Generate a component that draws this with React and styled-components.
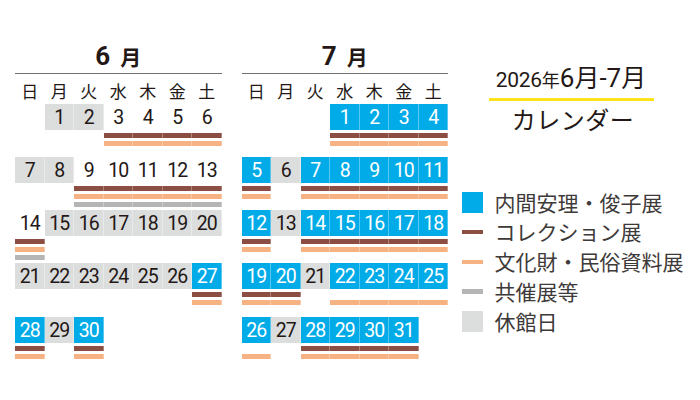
import React from 'react';
import styled, { createGlobalStyle } from 'styled-components';

const Global = createGlobalStyle`
  body {
    margin: 0;
    background: #fff;
  }
`;

const BLUE = '#00abe8';
const CLOSED = '#dcdddd';
const BROWN = '#8c4d42';
const ORANGE = '#f6b283';
const GRAYBAR = '#b5b5b6';
const INK = '#231815';

const Page = styled.div`
  display: flex;
  width: 700px;
  height: 400px;
  box-sizing: border-box;
  padding: 38px 0 0 15px;
  color: ${INK};
`;
const Calendars = styled.div`
  display: flex;
  gap: 20px;
`;
const Month = styled.section`
  width: 206.5px;
`;
const MonthTitle = styled.h2`
  margin: 0;
  height: 36px;
  box-sizing: border-box;
  border-bottom: 1.5px solid #727171;
  text-align: center;
  font: 700 26px/36px Roboto, "Noto Sans CJK JP", sans-serif;
`;
const TitleKanji = styled.span`
  margin-left: 10px;
  font-family: "Noto Sans CJK JP", sans-serif;
  font-size: 21px;
  line-height: 0;
`;
const Cols = styled.div`
  display: grid;
  grid-template-columns: repeat(7, 29.5px);
`;
const Weekdays = styled(Cols)`
  height: 29.5px;
  padding-top: 2.5px;
  box-sizing: border-box;
`;
const Weekday = styled.div`
  text-align: center;
  font: 400 17px/27px "Noto Sans CJK JP", sans-serif;
`;
const Week = styled(Cols)`
  height: 53.25px;
`;
const Day = styled.div`
  display: flex;
  flex-direction: column;
`;
const Cell = styled.div`
  height: 26px;
  padding-top: 1px;
  box-sizing: border-box;
  text-align: center;
  font: 400 19.5px/25px Roboto, sans-serif;
  letter-spacing: -1px;
  background: ${p => (p.$kind === 'open' ? BLUE : p.$kind === 'closed' ? CLOSED : 'transparent')};
  color: ${p => (p.$kind === 'open' ? '#fff' : INK)};
  box-shadow: ${p => (p.$kind ? 'inset -1px 0 rgba(255,255,255,0.35)' : 'none')};
`;
const Lanes = styled.div`
  display: flex;
  flex-direction: column;
  gap: 3px;
  margin-top: 3px;
`;
const Bar = styled.div`
  height: 5px;
  background: ${p => p.$color || 'transparent'};
  box-shadow: ${p => (p.$color ? 'inset -1px 0 rgba(255,255,255,0.3)' : 'none')};
`;

const Side = styled.aside`
  margin-left: 13.5px;
  padding-top: 24px;
`;
const Heading = styled.div`
  width: 165px;
  margin-left: 27px;
  text-align: center;
`;
const HeadTop = styled.div`
  height: 38.5px;
  box-sizing: border-box;
  border-bottom: 3.5px solid #ffe31a;
  font: 400 26px/32px Roboto, "Noto Sans CJK JP", sans-serif;
  white-space: nowrap;
`;
const Year = styled.span`
  font-family: "Liberation Sans Narrow", Roboto, sans-serif;
  font-size: 21px;
  letter-spacing: -0.3px;
  line-height: 0;
`;
const HeadKanji = styled.span`
  font-family: "Noto Sans CJK JP", sans-serif;
  font-size: ${p => p.$size || '25px'};
  line-height: 0;
`;
const HeadSub = styled.div`
  margin-top: 3px;
  font: 400 24px/30px "Noto Sans CJK JP", sans-serif;
  letter-spacing: 0.5px;
  padding-left: 4px;
`;
const Legend = styled.ul`
  list-style: none;
  margin: 54px 0 0;
  padding: 0;
`;
const LegendItem = styled.li`
  display: flex;
  align-items: center;
  gap: 12px;
  height: 29.75px;
  font: 400 21px/29.75px "Noto Sans CJK JP", sans-serif;
  color: #3e3a39;
  white-space: nowrap;
`;
const Swatch = styled.span`
  flex: none;
  width: 21px;
  height: ${p => (p.$line ? '4.5px' : '21px')};
  background: ${p => p.$color};
`;

const range = (a, b) => Array.from({ length: b - a + 1 }, (_, i) => a + i);
const set = (...parts) => new Set(parts.flat());

const months = [
  {
    label: '6',
    start: 1,
    days: 30,
    open: set(27, 28, 30),
    closed: set(1, 2, 7, 8, range(15, 26), 29),
    brown: set(range(3, 6), range(9, 14), 27, 28, 30),
    orange: set(range(3, 6), range(9, 14), 27, 28, 30),
    gray: set(range(9, 14)),
  },
  {
    label: '7',
    start: 3,
    days: 31,
    open: set(range(1, 5), range(7, 12), range(14, 20), range(22, 26), range(28, 31)),
    closed: set(6, 13, 21, 27),
    brown: set(range(1, 5), range(7, 12), range(14, 20), range(28, 31)),
    orange: set(range(1, 5), range(7, 12), range(14, 20), range(22, 26), range(28, 31)),
    gray: set(),
  },
];

const weekdays = ['日', '月', '火', '水', '木', '金', '土'];

function weeksOf(m) {
  const slots = [...Array(m.start).fill(null), ...range(1, m.days)];
  const weeks = [];
  for (let i = 0; i < slots.length; i += 7) weeks.push(slots.slice(i, i + 7));
  return weeks;
}

function MonthCalendar({ m }) {
  return (
    <Month>
      <MonthTitle>
        {m.label}
        <TitleKanji>月</TitleKanji>
      </MonthTitle>
      <Weekdays>
        {weekdays.map(w => (
          <Weekday key={w}>{w}</Weekday>
        ))}
      </Weekdays>
      {weeksOf(m).map((week, wi) => (
        <Week key={wi}>
          {week.map((d, di) => {
            if (!d) return <Day key={di} />;
            const kind = m.open.has(d) ? 'open' : m.closed.has(d) ? 'closed' : null;
            return (
              <Day key={di}>
                <Cell $kind={kind}>{d}</Cell>
                <Lanes>
                  <Bar $color={m.brown.has(d) ? BROWN : null} />
                  <Bar $color={m.orange.has(d) ? ORANGE : null} />
                  <Bar $color={m.gray.has(d) ? GRAYBAR : null} />
                </Lanes>
              </Day>
            );
          })}
        </Week>
      ))}
    </Month>
  );
}

const legend = [
  { color: BLUE, text: '内間安理・俊子展' },
  { color: BROWN, text: 'コレクション展', line: true },
  { color: ORANGE, text: '文化財・民俗資料展', line: true },
  { color: GRAYBAR, text: '共催展等', line: true },
  { color: CLOSED, text: '休館日' },
];

export default function App() {
  return (
    <Page>
      <Global />
      <Calendars>
        {months.map(m => (
          <MonthCalendar key={m.label} m={m} />
        ))}
      </Calendars>
      <Side>
        <Heading>
          <HeadTop>
            <Year>2026</Year>
            <HeadKanji $size="18px">年</HeadKanji>6<HeadKanji>月</HeadKanji>-7<HeadKanji>月</HeadKanji>
          </HeadTop>
          <HeadSub>カレンダー</HeadSub>
        </Heading>
        <Legend>
          {legend.map(l => (
            <LegendItem key={l.text}>
              <Swatch $color={l.color} $line={l.line} />
              {l.text}
            </LegendItem>
          ))}
        </Legend>
      </Side>
    </Page>
  );
}
